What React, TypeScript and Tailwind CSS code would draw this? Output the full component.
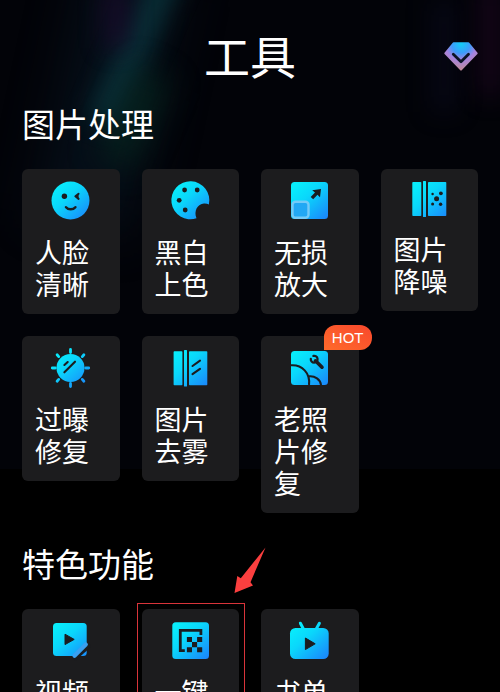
import type { ReactNode } from "react";

const INK = "#1b1c1f";

function Glyph({ height = 39, children }: { height?: number; children: ReactNode }) {
  return (
    <svg
      width="39"
      height={height}
      viewBox={`0 0 39 ${height}`}
      fill="url(#aqua)"
      className="mx-auto block overflow-visible"
      aria-hidden="true"
    >
      {children}
    </svg>
  );
}

const FaceIcon = () => (
  <Glyph>
    <circle cx="19.5" cy="19.5" r="19" />
    <circle cx="13.4" cy="15.3" r="2.7" fill={INK} />
    <path d="M27.6 12.8 24.4 15.3l3.2 2.6" fill={INK} stroke={INK} strokeWidth="2" strokeLinejoin="round" strokeLinecap="round" />
    <path d="M15 26.2c2.4 2.8 7 2.8 9.4 0" fill="none" stroke={INK} strokeWidth="2.5" strokeLinecap="round" />
  </Glyph>
);

const PaletteIcon = () => (
  <Glyph>
    <path d="M37.9 23.5A19 19 0 1 0 25.5 37.3C22.5 30 26.5 23 33 22.6 35 22.5 36.5 22.8 37.9 23.5Z" />
    <g fill={INK}>
      <circle cx="13.6" cy="9" r="2.4" />
      <circle cx="26.2" cy="9" r="2.4" />
      <circle cx="8.2" cy="19.3" r="2.4" />
      <circle cx="14.2" cy="29" r="2.4" />
    </g>
  </Glyph>
);

const EnlargeIcon = () => (
  <Glyph>
    <rect x="1" y="1" width="37" height="37" rx="3.5" />
    <rect x="2.5" y="20.7" width="16" height="16" rx="3" fill="#22a8f4" stroke="#74cbf8" strokeWidth="2.4" />
    <path d="M31 8 30 16.3 27.5 13.8 23.2 18.2 20.7 16 25 11.5 22.2 9.2Z" fill={INK} />
  </Glyph>
);

const DenoiseIcon = () => (
  <Glyph height={36}>
    <rect x="2.3" y="1" width="9" height="34" rx="0.8" />
    <rect x="13" y="0" width="3" height="36" rx="0.5" />
    <rect x="18" y="1" width="18.3" height="34" rx="0.8" />
    <g fill={INK}>
      <circle cx="22.6" cy="13" r="1.2" />
      <circle cx="30.9" cy="12.3" r="1.9" />
      <circle cx="26.6" cy="17.7" r="2.5" />
      <circle cx="22.6" cy="23" r="1.5" />
      <circle cx="30.6" cy="23.3" r="1.7" />
    </g>
  </Glyph>
);

const SunIcon = () => (
  <Glyph>
    <circle cx="19.5" cy="20" r="14" />
    <path
      d="M19.5 1.5v3M19.5 35.5v3M1.3 20h3M34.7 20h3M6.1 6.8l1.6 1.8M32.9 6.8l-1.6 1.8M6.1 33.2l1.6-1.8M32.9 33.2l-1.6-1.8"
      fill="none"
      stroke="url(#aqua)"
      strokeWidth="2.8"
      strokeLinecap="round"
    />
    <path d="M13.4 17 16.7 14M13.4 24.3 24 13.7" fill="none" stroke={INK} strokeWidth="2.1" strokeLinecap="round" />
  </Glyph>
);

const DehazeIcon = () => (
  <Glyph>
    <rect x="2.6" y="3.3" width="8.8" height="34" rx="0.8" />
    <rect x="13" y="2" width="3" height="36.5" rx="0.5" />
    <rect x="18" y="3.3" width="18.3" height="34" rx="0.8" />
    <path d="M21.5 18 29 12.7M21.5 26.2 29 20.8" fill="none" stroke={INK} strokeWidth="2.1" strokeLinecap="round" />
  </Glyph>
);

const OldPhotoIcon = () => (
  <Glyph>
    <rect x="1" y="3" width="37" height="34" rx="3.5" />
    <path d="M1 17.3C12 16.5 20.5 25 19 37M18.5 28.3C25 27.5 30.5 31.5 31 37" fill="none" stroke={INK} strokeWidth="2.1" />
    <path d="M25.5 12.8 32 19.2" fill="none" stroke={INK} strokeWidth="3.6" strokeLinecap="round" />
    <path d="M23.4 7.9A3.4 3.4 0 1 1 20.8 10.8" fill="none" stroke={INK} strokeWidth="2.2" strokeLinecap="round" />
  </Glyph>
);

const VideoEditIcon = () => (
  <Glyph>
    <rect x="2" y="2" width="33.7" height="33" rx="3.5" />
    <path d="M14 13.2v10.4l9.2-5.2Z" fill={INK} stroke={INK} strokeLinejoin="round" />
    <path d="M37.5 20.5 21.5 36.5 24 40 40 26Z" fill={INK} />
    <path d="M34.8 23.5 23.5 34.8" fill="none" stroke="#3aa0f0" strokeWidth="4.2" strokeLinecap="round" />
  </Glyph>
);

const MosaicIcon = () => (
  <Glyph>
    <rect x="1.3" y="1.3" width="36.7" height="36.7" rx="3.5" />
    <path d="M29.9 14V9.3H9.3V29.7H13.8" fill="none" stroke={INK} strokeWidth="2.8" />
    <path
      d="M15.9 16h5.1v5.1h-5.1zM26.1 16h5.1v5.1h-5.1zM21 21.1h5.1v5.1H21zM15.9 26.2h5.1v5.1h-5.1zM26.1 26.2h5.1v5.1h-5.1z"
      fill={INK}
    />
  </Glyph>
);

const TvIcon = () => (
  <Glyph>
    <path d="M10.4 2.2 13.4 8M29.4 2.2 26.2 8" fill="none" stroke="url(#aqua)" strokeWidth="3" strokeLinecap="round" />
    <rect x="0" y="7" width="38.7" height="31" rx="5.5" />
    <path d="M15.4 17v11.6l9.8-5.8Z" fill={INK} stroke={INK} strokeLinejoin="round" />
  </Glyph>
);

type Tool = {
  label: string;
  icon: ReactNode;
  hot?: boolean;
  marked?: boolean;
};

const imageTools: Tool[] = [
  { label: "人脸清晰", icon: <FaceIcon /> },
  { label: "黑白上色", icon: <PaletteIcon /> },
  { label: "无损放大", icon: <EnlargeIcon /> },
  { label: "图片降噪", icon: <DenoiseIcon /> },
  { label: "过曝修复", icon: <SunIcon /> },
  { label: "图片去雾", icon: <DehazeIcon /> },
  { label: "老照片修复", icon: <OldPhotoIcon />, hot: true },
];

const featureTools: Tool[] = [
  { label: "视频", icon: <VideoEditIcon /> },
  { label: "一键", icon: <MosaicIcon />, marked: true },
  { label: "书单", icon: <TvIcon /> },
];

function ToolCard({ label, icon, hot, marked }: Tool) {
  return (
    <div className="relative">
      <button type="button" className="block w-full rounded-md bg-[#1c1c1e] px-[13px] pt-3 pb-3.5 text-left">
        {icon}
        <span className="mt-4 block text-[27px] leading-[32px]">{label}</span>
      </button>
      {hot && (
        <span className="absolute -top-[11px] -right-[13px] rounded-xl rounded-bl-none bg-linear-to-tr from-[#ff6a2b] to-[#f8472c] px-2 font-[Liberation_Sans,sans-serif] text-[15px] leading-[25px]">
          HOT
        </span>
      )}
      {marked && (
        <>
          <span className="absolute -top-1.5 -right-1.5 -bottom-10 -left-[5px] border border-[#d9343a]" />
          <svg width="32" height="46" viewBox="0 0 32 46" className="absolute -top-[62px] left-[92px]" aria-hidden="true">
            <path d="M31.5 0.5 16.5 35.2 19 38.5 0.5 46 3.3 29 6.8 31.3Z" fill="#fb3f3f" />
          </svg>
        </>
      )}
    </div>
  );
}

function ToolSection({ title, tools }: { title: string; tools: Tool[] }) {
  return (
    <section>
      <h2 className="text-[33px] leading-10">{title}</h2>
      <div className="mt-[26px] grid grid-cols-4 items-start gap-[22px]">
        {tools.map((tool) => (
          <ToolCard key={tool.label} {...tool} />
        ))}
      </div>
    </section>
  );
}

// faint aurora glow behind the upper part of the page
function Aurora() {
  return (
    <div className="absolute inset-x-0 top-0 h-[469px] overflow-hidden bg-[#020308]">
      <div className="absolute -top-8 left-[60px] h-[260px] w-24 rotate-12 bg-[#07131f] opacity-70 blur-xl" />
      <div className="absolute -top-10 left-[122px] h-[170px] w-7 rotate-[24deg] bg-[#0b3a42] opacity-80 blur-md" />
      <div className="absolute -top-4 left-[104px] h-16 w-6 bg-[#1a0a2c] opacity-80 blur-md" />
      <div className="absolute top-[70px] left-[116px] h-24 w-9 rotate-[24deg] bg-[#06261f] opacity-80 blur-lg" />
      <div className="absolute -top-4 right-0 h-28 w-5 bg-[#1e0620] opacity-80 blur-md" />
      <div className="absolute top-0 right-[44px] h-28 w-6 bg-[#0a0a1e] opacity-60 blur-md" />
    </div>
  );
}

export default function App() {
  return (
    <main className="relative h-screen overflow-hidden bg-black font-['Noto_Sans_CJK_SC',sans-serif] text-white">
      <svg width="0" height="0" className="absolute" aria-hidden="true">
        <defs>
          <linearGradient id="aqua" gradientUnits="userSpaceOnUse" x1="6" y1="4" x2="37" y2="38">
            <stop offset="0" stopColor="#08edfb" />
            <stop offset="0.35" stopColor="#0ad7fb" />
            <stop offset="1" stopColor="#1b84fb" />
          </linearGradient>
          <radialGradient id="gem" gradientUnits="userSpaceOnUse" cx="17" cy="2" r="26">
            <stop offset="0" stopColor="#12cdf5" />
            <stop offset="0.35" stopColor="#3d9cfb" />
            <stop offset="0.6" stopColor="#a583e0" />
            <stop offset="1" stopColor="#c08b98" />
          </radialGradient>
        </defs>
      </svg>
      <Aurora />
      <div className="relative px-[22px] pt-6">
        <header className="mb-[19px] grid grid-cols-[1fr_auto_1fr] items-center">
          <h1 className="col-start-2 text-[46px] leading-[60px]">工具</h1>
          <button type="button" aria-label="VIP" className="mt-1 justify-self-end">
            <svg width="34" height="29" viewBox="0 0 34 29" className="block" aria-hidden="true">
              <path
                d="M9.5 1.3h15l8.2 10L17 27.6 1.3 11.3Z"
                fill="url(#gem)"
                stroke="url(#gem)"
                strokeWidth="2"
                strokeLinejoin="round"
              />
              <path d="M9.3 12.3 17 19.7l7.5-7.4" fill="none" stroke="#0b1426" strokeWidth="2.8" strokeLinecap="round" strokeLinejoin="round" />
            </svg>
          </button>
        </header>
        <div className="flex flex-col gap-[30px]">
          <ToolSection title="图片处理" tools={imageTools} />
          <ToolSection title="特色功能" tools={featureTools} />
        </div>
      </div>
    </main>
  );
}
